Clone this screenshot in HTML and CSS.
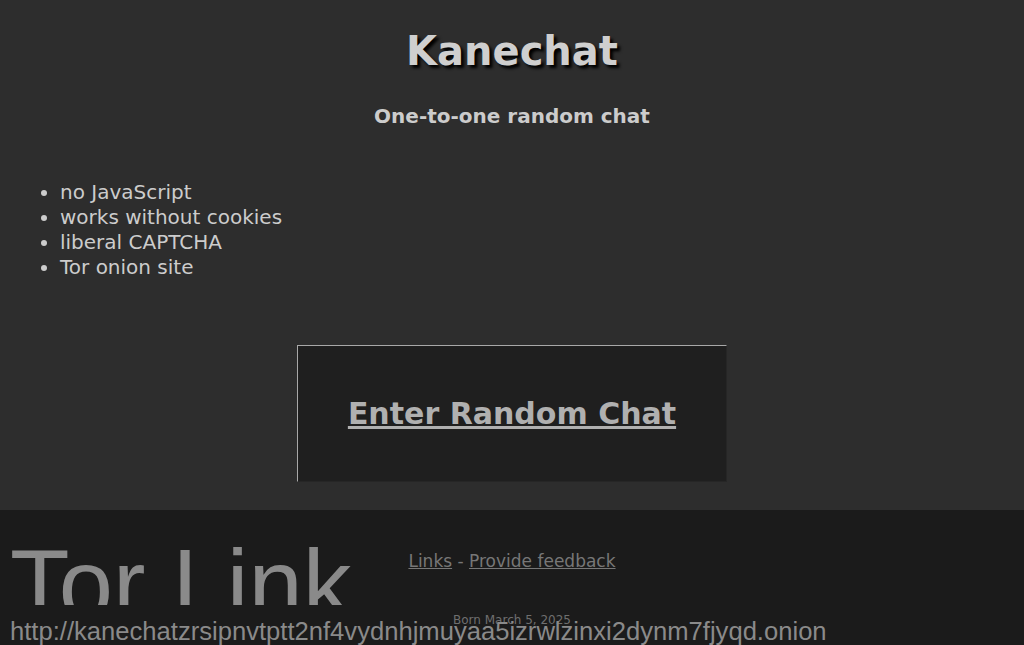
FILE: index.html
```html
<!DOCTYPE html>
<html lang="en">
<head>
    <meta charset="UTF-8">
    <meta name="viewport" content="width=device-width, initial-scale=1.0">
    <title>Kanechat</title>
    <link rel="stylesheet" href="styles.css">
</head>
<body>

    <div class="main">
        <h1>Kanechat</h1>
        <p class="tagline">One-to-one random chat</p>

        <ul class="features">
            <li>no JavaScript</li>
            <li>works without cookies</li>
            <li>liberal CAPTCHA</li>
            <li>Tor onion site</li>
        </ul>

        <div class="enter">
            <a href="#">Enter Random Chat</a>
        </div>
    </div>

    <div class="footer">
        <div class="footer-links">
            <a href="#">Links</a> - <a href="#">Provide feedback</a>
        </div>
        <div class="born">Born March 5, 2025</div>
    </div>

    <!-- tor link overlay -->
    <div class="tor-title">Tor Link</div>
    <div class="tor-url">http://kanechatzrsipnvtptt2nf4vydnhjmuyaa5izrwlzinxi2dynm7fjyqd.onion</div>

</body>
</html>
```

FILE: styles.css
```css
body {
    font-family: 'DejaVu Sans', Verdana, sans-serif;
    background-color: #2d2d2d;
    color: #cccccc;
    margin: 0;
    padding: 0;
    overflow: hidden;
}
.main {
    padding: 28px 20px 28px 20px;
}
h1 {
    margin: 0;
    text-align: center;
    font-size: 40px;
    line-height: 47px;
    color: #cfcfcf;
    text-shadow: 3px 3px 3px #000;
}
.tagline {
    margin: 29px 0 0 0;
    text-align: center;
    font-size: 20px;
    font-weight: bold;
    line-height: 24px;
    color: #cccccc;
}
.features {
    margin: 52px 0 0 0;
    padding-left: 40px;
    font-size: 20px;
    line-height: 25px;
    color: #cccccc;
}
.enter {
    width: 428px;
    margin: 65px auto 0 auto;
    padding: 50px 0;
    text-align: center;
    background-color: #1f1f1f;
    border: 1px solid;
    border-color: #a8a8a8 #262626 #262626 #a8a8a8;
}
.enter a {
    font-size: 30px;
    font-weight: bold;
    line-height: 35px;
    color: #b0b0b0;
}
.footer {
    background-color: #1b1b1b;
    padding: 41px 0 40px 0;
    text-align: center;
    color: #777;
}
.footer-links {
    font-size: 17px;
    line-height: 20px;
}
.footer-links a {
    color: #777;
}
.born {
    margin-top: 42px;
    font-size: 12px;
    line-height: 14px;
    color: #6f6f6f;
}
.tor-title {
    position: absolute;
    left: 10px;
    top: 536px;
    height: 69px;
    overflow: hidden;
    font-family: 'Liberation Sans', Arial, sans-serif;
    font-size: 97.5px;
    line-height: 97.5px;
    color: #8a8a8a;
    white-space: nowrap;
}
.tor-url {
    position: absolute;
    left: 10px;
    top: 616px;
    font-family: 'Liberation Sans', Arial, sans-serif;
    font-size: 25.6px;
    line-height: 30px;
    color: #8a8a8a;
    white-space: nowrap;
}
```
